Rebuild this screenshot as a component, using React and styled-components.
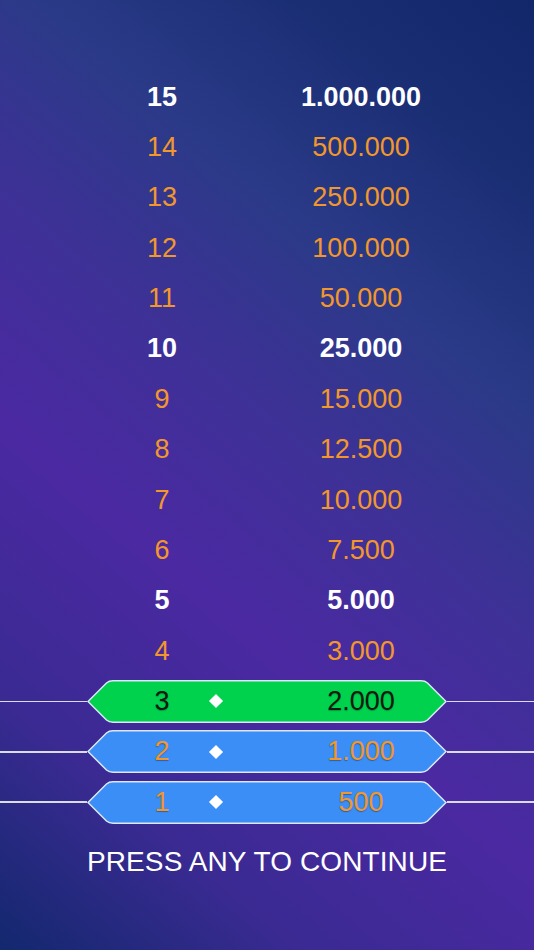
import React from "react";
import styled, { createGlobalStyle, css } from "styled-components";

const levels = [
  { step: 15, prize: "1.000.000", safe: true },
  { step: 14, prize: "500.000" },
  { step: 13, prize: "250.000" },
  { step: 12, prize: "100.000" },
  { step: 11, prize: "50.000" },
  { step: 10, prize: "25.000", safe: true },
  { step: 9, prize: "15.000" },
  { step: 8, prize: "12.500" },
  { step: 7, prize: "10.000" },
  { step: 6, prize: "7.500" },
  { step: 5, prize: "5.000", safe: true },
  { step: 4, prize: "3.000" },
  { step: 3, prize: "2.000", won: true, current: true },
  { step: 2, prize: "1.000", won: true },
  { step: 1, prize: "500", won: true },
];

const GlobalStyle = createGlobalStyle`
  html, body {
    margin: 0;
    padding: 0;
    height: 100%;
  }
  #root {
    height: 100%;
  }
`;

const Screen = styled.div`
  width: 534px;
  height: 950px;
  overflow: hidden;
  font-family: "Liberation Sans", Arial, sans-serif;
  background: linear-gradient(
    40deg,
    #13286e 0%,
    #3a2a92 18%,
    #4b29a2 38%,
    #3d3196 55%,
    #2b3a88 70%,
    #1a2e74 86%,
    #12266a 100%
  );
  display: flex;
  flex-direction: column;
  align-items: stretch;
  padding-top: 72px;
  box-sizing: border-box;
`;

const Ladder = styled.div`
  display: flex;
  flex-direction: column;
`;

const Row = styled.div`
  height: 50.36px;
  display: grid;
  grid-template-columns: 1fr 360px 1fr;
  align-items: center;
`;

const Wire = styled.div`
  height: 1.5px;
  background: ${(p) => (p.$show ? "#d9dcec" : "transparent")};
`;

const Plate = styled.div`
  position: relative;
  height: 43px;
  display: grid;
  grid-template-columns: 40px 70px 40px 1fr;
  align-items: center;
`;

const PlateShape = styled.svg`
  position: absolute;
  inset: 0;
  width: 100%;
  height: 100%;
`;

const Cell = styled.div`
  position: relative;
  text-align: center;
  font-size: 27px;
  line-height: 43px;
  color: #f2972c;
  ${(p) =>
    p.$safe &&
    css`
      color: #ffffff;
      font-weight: 700;
    `}
  ${(p) =>
    p.$dark &&
    css`
      color: #0e1a10;
      text-shadow: 0 1px 1px rgba(0, 60, 20, 0.35);
    `}
  ${(p) =>
    p.$shade &&
    css`
      text-shadow: 0 1px 1px rgba(40, 40, 60, 0.45);
    `}
`;

const Step = styled(Cell)`
  grid-column: 2;
`;

const Prize = styled(Cell)`
  grid-column: 4;
  padding-left: 38px;
`;

const Gem = styled.div`
  position: relative;
  grid-column: 3;
  justify-self: center;
  margin-left: -2px;
  width: 10px;
  height: 10px;
  background: #ffffff;
  transform: rotate(45deg);
`;

const Prompt = styled.div`
  margin-top: 19px;
  text-align: center;
  font-size: 28px;
  line-height: 32px;
  color: #ffffff;
  letter-spacing: 0.1px;
`;

const PLATE_PATH =
  "M1,21.5 L19.5,3 Q22,0.75 26,0.75 L334,0.75 Q338,0.75 340.5,3 L359,21.5 L340.5,40 Q338,42.25 334,42.25 L26,42.25 Q22,42.25 19.5,40 Z";

const Level = ({ level }) => {
  const fill = level.current ? "#00d24e" : "#3a8ef6";
  const dark = level.current;
  const shade = level.won && !level.current;

  return (
    <Row>
      <Wire $show={level.won} />
      <Plate>
        {level.won && (
          <PlateShape viewBox="0 0 360 43" preserveAspectRatio="none">
            <path
              d={PLATE_PATH}
              fill={fill}
              stroke="#dce8f8"
              strokeWidth="1.5"
            />
          </PlateShape>
        )}
        <Step $safe={level.safe} $dark={dark} $shade={shade}>
          {level.step}
        </Step>
        {level.won && <Gem />}
        <Prize $safe={level.safe} $dark={dark} $shade={shade}>
          {level.prize}
        </Prize>
      </Plate>
      <Wire $show={level.won} />
    </Row>
  );
};

const App = () => {
  return (
    <>
      <GlobalStyle />
      <Screen>
        <Ladder>
          {levels.map((level) => (
            <Level key={level.step} level={level} />
          ))}
        </Ladder>
        <Prompt>PRESS ANY TO CONTINUE</Prompt>
      </Screen>
    </>
  );
};

export default App;
